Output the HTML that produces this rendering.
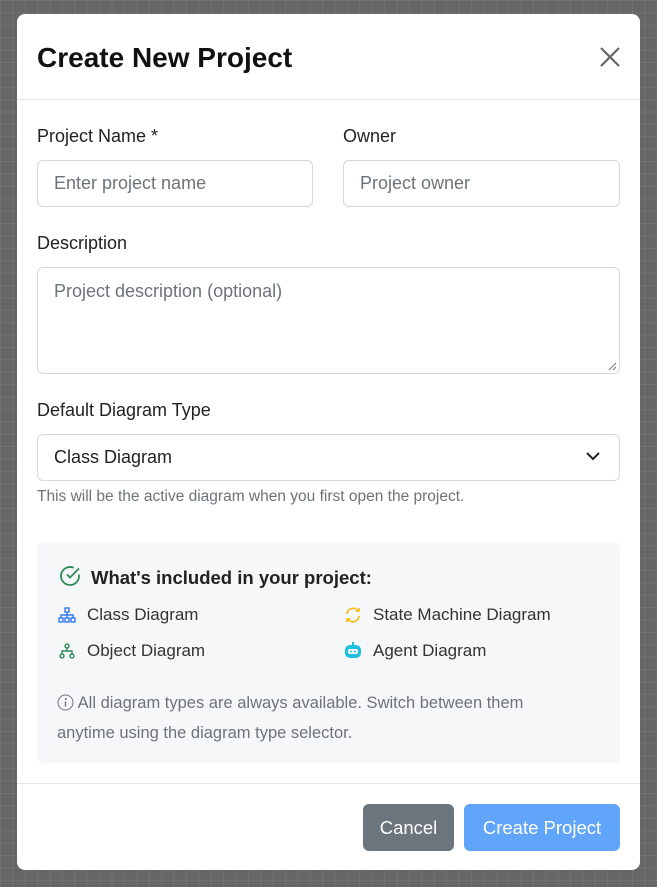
<!DOCTYPE html>
<html><head><meta charset="utf-8"><style>
*{box-sizing:border-box;margin:0;padding:0}
body{width:657px;height:887px;overflow:hidden;font-family:"Liberation Sans",sans-serif;background:#666;
background-image:linear-gradient(rgba(255,255,255,.07) 1px,transparent 1px),linear-gradient(90deg,rgba(255,255,255,.07) 1px,transparent 1px);background-size:12.4px 12.4px;position:relative}
.m{position:absolute;left:17px;top:14px;width:623px;height:856px;background:#fff;border-radius:8px}
.a{position:absolute}
.t{left:20px;top:28px;font-size:28px;color:#111;font-weight:bold}
.hr{left:0;width:623px;height:1px;background:#e3e5e8}
.lbl{font-size:18px;color:#222}
.in{border:1px solid #d5d8dc;border-radius:6px;font-size:18px;color:#6c737a;padding-left:16px;display:flex;align-items:center}
.help{font-size:15.5px;color:#6c737a}
.box{left:20px;top:528px;width:583px;height:221px;background:#f6f7f9;border-radius:6px}
.it{font-size:17px;color:#333;display:flex;align-items:center;gap:10px}
.btn{border-radius:6px;color:#fff;font-size:18.5px;display:flex;align-items:center;justify-content:center}
</style></head><body>
<div class="m">
<div class="a t">Create New Project</div>
<svg class="a" style="left:581px;top:31px" width="24" height="24" viewBox="0 0 24 24"><path d="M3 3L21 21M21 3L3 21" stroke="#666" stroke-width="2.2"/></svg>
<div class="a hr" style="top:85px"></div>
<div class="a lbl" style="left:20px;top:112px">Project Name *</div>
<div class="a lbl" style="left:326px;top:112px">Owner</div>
<div class="a in" style="left:20px;top:146px;width:276px;height:47px">Enter project name</div>
<div class="a in" style="left:326px;top:146px;width:277px;height:47px">Project owner</div>
<div class="a lbl" style="left:20px;top:219px">Description</div>
<div class="a in" style="left:20px;top:253px;width:583px;height:107px;align-items:flex-start;padding-top:13px">Project description (optional)</div>
<svg class="a" style="left:591px;top:348px" width="9" height="9"><path d="M1 8L8 1M5 8L8 5" stroke="#777"/></svg>
<div class="a lbl" style="left:20px;top:386px">Default Diagram Type</div>
<div class="a in" style="left:20px;top:420px;width:583px;height:47px;color:#222">Class Diagram</div>
<svg class="a" style="left:569px;top:437px" width="14" height="10"><path d="M1 2L7 8L13 2" stroke="#222" stroke-width="2" fill="none"/></svg>
<div class="a help" style="left:20px;top:474px">This will be the active diagram when you first open the project.</div>
<div class="a box">
<svg class="a" style="left:22px;top:23px" width="22" height="22" viewBox="0 0 22 22"><path d="M20 9.5V11A9 9 0 1 1 14.7 2.8" stroke="#2e8b57" stroke-width="1.8" fill="none"/><path d="M20 3.5L11 12.5L8 9.5" stroke="#2e8b57" stroke-width="1.8" fill="none"/></svg>
<div class="a" style="left:54px;top:25px;font-size:18.5px;font-weight:bold;color:#222">What's included in your project:</div>
<div class="a it" style="left:20px;top:63px"><svg width="20" height="18" viewBox="0 0 20 18"><g stroke="#2f7be8" stroke-width="1.4" fill="none"><rect x="8" y="2" width="4" height="4"/><rect x="2" y="12" width="4" height="4"/><rect x="8" y="12" width="4" height="4"/><rect x="14" y="12" width="4" height="4"/><path d="M10 6V12M4 12V9H16V12"/></g></svg>Class Diagram</div>
<div class="a it" style="left:306px;top:63px"><svg width="20" height="18" viewBox="0 0 20 18"><g stroke="#f5b800" stroke-width="1.6" fill="none"><path d="M4 8A6 6 0 0 1 15 5"/><path d="M16 10A6 6 0 0 1 5 13"/><path d="M13 5H16V2M7 13H4V16"/></g></svg>State Machine Diagram</div>
<div class="a it" style="left:20px;top:99px"><svg width="20" height="18" viewBox="0 0 20 18"><g stroke="#2e8b57" stroke-width="1.4" fill="none"><circle cx="10" cy="4" r="2"/><circle cx="5" cy="14" r="2"/><circle cx="15" cy="14" r="2"/><path d="M10 6V9M5 12V9H15V12"/></g></svg>Object Diagram</div>
<div class="a it" style="left:306px;top:99px"><svg width="20" height="18" viewBox="0 0 20 18"><rect x="2" y="3" width="16" height="13" rx="5" fill="#1ec0e0"/><rect x="5" y="7" width="10" height="5" rx="2" fill="#fff"/><path d="M10 0V3" stroke="#1ec0e0" stroke-width="2"/><circle cx="8" cy="9.5" r="1" fill="#1ec0e0"/><circle cx="12" cy="9.5" r="1" fill="#1ec0e0"/></svg>Agent Diagram</div>
<div class="a" style="left:20px;top:146px;width:520px;font-size:16.5px;line-height:30px;color:#6c737a"><svg width="17" height="17" viewBox="0 0 17 17" style="vertical-align:-3px"><circle cx="8.5" cy="8.5" r="7.5" stroke="#6c737a" fill="none"/><path d="M8.5 7.5V12.5" stroke="#6c737a" stroke-width="1.4"/><circle cx="8.8" cy="5" r="1" fill="#6c737a"/></svg> All diagram types are always available. Switch between them anytime using the diagram type selector.</div>
</div>
<div class="a hr" style="top:769px"></div>
<div class="a btn" style="left:346px;top:790px;width:91px;height:47px;background:#6c757d">Cancel</div>
<div class="a btn" style="left:447px;top:790px;width:156px;height:47px;background:#60a5fa">Create Project</div>
</div>
</body></html>
